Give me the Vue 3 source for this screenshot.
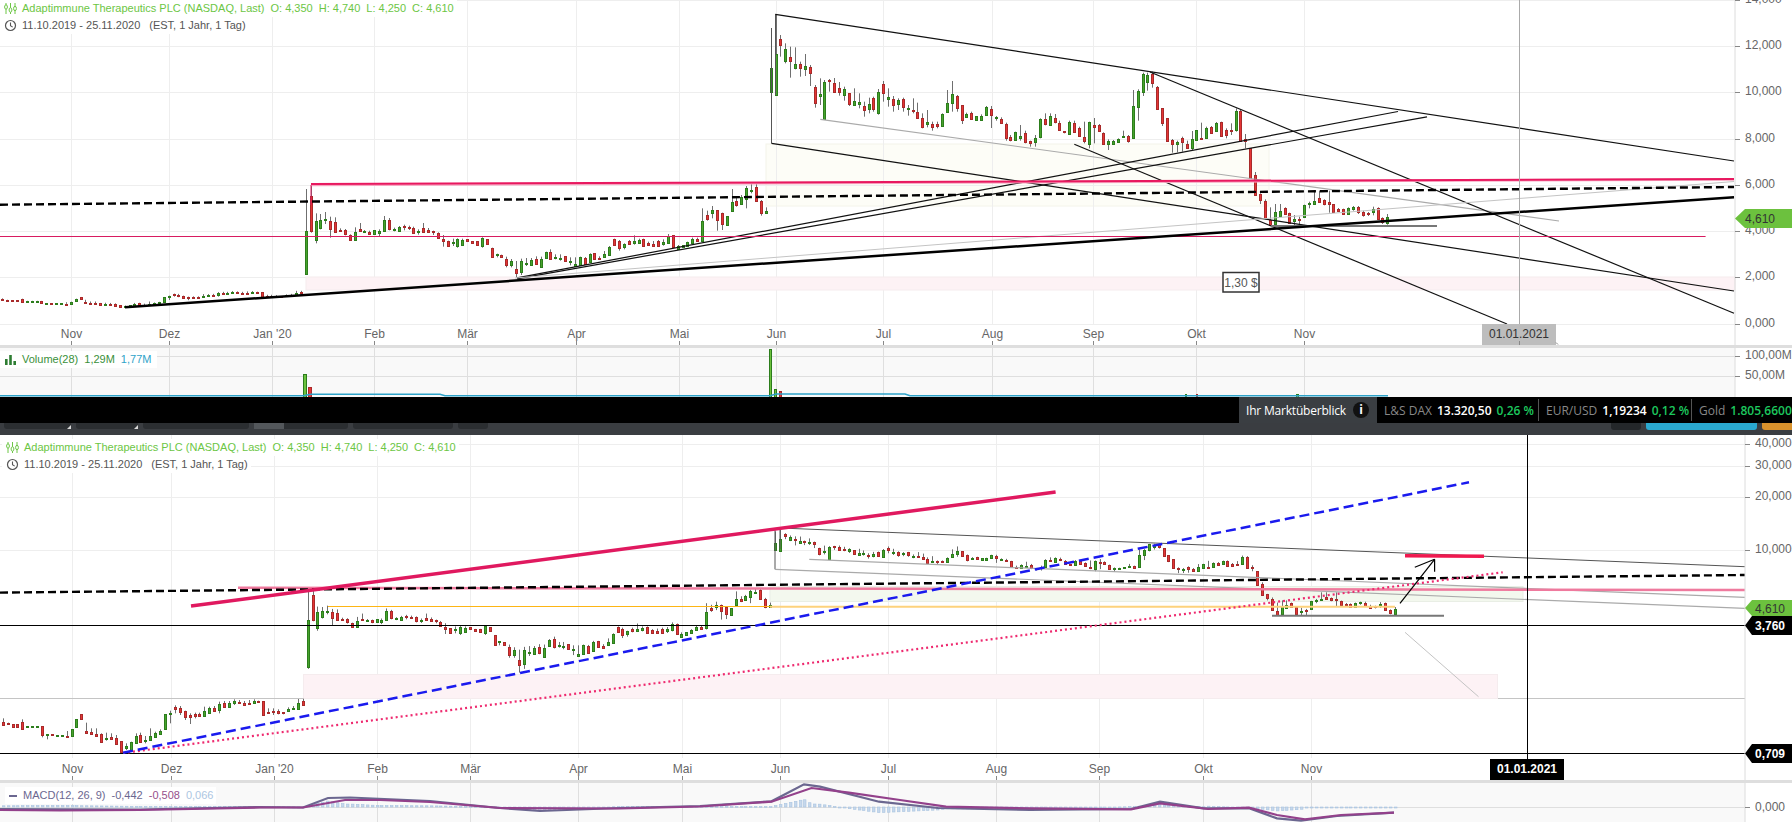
<script setup>
// Bars read off the chart: [up, bodyTop, bodyBottom, high, low]
// early = lower log chart (y = 600 + v / 3), late = upper linear chart (y = v / 3)
const early = [
  [0,365,374,355,375],[0,368,371],[0,372,380],[0,372,380],[0,365,387,358,390],[1,378,381],[1,378,380],[1,378,380],
  [0,379,405,379,412],[1,403,405,403,418],[0,403,405],[1,405,408],[1,405,408],[0,408,410,393,410],[1,387,409],[1,358,380],
  [0,343,358],[0,392,400,368,400],[0,396,403,385,403],[0,402,408,385,408],[0,403,425,400,427],[1,413,417,398,422],[0,411,416,400,416],
  [0,414,431,405,433],[0,424,455,424,458],[1,438,445,430,450],[1,427,450,425,450],[1,408,430,400,430],[0,406,425,398,425],[1,419,421,408,430],
  [1,408,420,385,420],[1,399,411,395,411],[1,393,401,388,405],[1,343,386],[1,338,342,332,370],[0,320,326,316,340],[0,325,336,318,345],
  [0,332,350,332,360],[0,344,350,340,372],[0,342,348,338,355],[0,342,347,338,347],[1,332,347,320,347],[1,325,338,320,338],[0,325,333,318,333],
  [1,312,330,305,340],[0,308,322,303,322],[1,310,322,303,322],[1,304,308,298,315],[0,305,310,300,310],[0,308,314,303,318],[0,308,311,300,315],
  [1,304,308,298,312],[0,302,305],[0,304,344],[0,335,338,325,342],[0,334,337,325,345],[0,333,338,328,343],[0,337,339,337,343],[1,327,333,322,333],
  [1,323,327,318,327],[1,309,326,296,326],[0,303,314,296,314]
]
const late = [
  [1,693,822,567,825],[0,588,693,555,698],[1,663,720,640,730],[1,660,684,642,688],[1,657,660,636,672],[0,664,687,650,713],[0,666,695,652,697],
  [0,690,694,685,696],[0,691,702,687,706],[0,705,719,703,720],[1,697,719,682,720],[0,688,693,669,696],[1,693,697,690,699],[0,695,702,692,705],
  [1,691,701],[1,692,700,688,708],[1,660,692,648,692],[0,660,687,654,691],[1,687,691,683,694],[1,681,692,678,692],[0,678,681,674,691],
  [0,681,683,677,690],[0,684,698,680,702],[1,692,694,688,704],[0,685,695,669,697],[0,690,697,684,697],[0,694,696,692,705],[0,700,713,697,716],
  [0,718,724,705,740],[0,722,737],[1,726,729,716,738],[1,717,738,715,743],[1,720,734,716,736],[0,718,724],[0,724,730],[0,724,735],
  [1,715,737,712,743],[0,718,732],[0,743,770],[1,761,764,761,772],[0,764,770],[0,777,795,770,802],[1,784,796,777,802],[0,807,818,783,832],
  [1,784,815,776,825],[1,788,790,774,798],[1,780,794,774,794],[0,777,791,769,794],[1,778,800,770,800],[1,757,773,755,773],[0,756,777,748,780],
  [1,772,775,763,778],[1,774,776,763,782],[0,769,782],[1,782,784,772,796],[1,793,797,772,800],[1,772,794,770,794],[0,774,791,771,791],
  [1,763,786,760,788],[0,760,776],[0,773,778,769,778],[1,762,771,753,773],[1,741,765,738,765],[0,718,734,716,736],[0,724,743,720,752],
  [1,732,740,730,748],[0,723,732,720,735],[1,723,730,706,734],[1,720,729,716,732],[0,718,737,716,739],[0,729,736,725,738],[0,731,737,723,740],
  [0,723,737,720,737],[1,725,731,718,737],[1,707,728,702,732],[0,706,740],[1,739,748,735,750],[1,735,742],[1,727,738,725,738],[1,717,728,713,728],
  [0,718,724,713,724],[1,663,722,625,726],[0,645,656,632,662],[1,631,640,618,655],[0,631,660,631,692],[0,640,671,638,690],[1,648,674,648,677],
  [1,607,632,567,635],[0,604,614,592,620],[1,592,611,585,615],[1,565,598,558,625],[1,570,574,552,580],[0,562,604,550,606],[0,604,640,600,647],
  [1,634,640,622,642],
  [1,205,275,85,275],[1,163,285,43,285],[0,118,134,105,170],[1,148,182,130,190],[0,172,182,140,233],[1,193,205,142,208],[0,193,203,185,230],
  [1,198,206,162,228],[0,202,218,195,258],[0,262,308,255,323],[1,283,287,235,315],[1,247,356,240,356],[0,240,244,237,275],[0,250,275,234,275],
  [0,265,277,246,287],[1,268,284,260,302],[0,280,311,280,318],[1,304,316,265,318],[1,307,311,280,325],[0,319,329,305,350],[1,313,326,293,340],
  [0,295,328,290,335],[1,277,338,267,344],[0,253,280,243,305],[1,292,298,265,320],[0,298,316,288,335],[1,301,311,295,330],[0,298,320,293,335],
  [1,325,328,315,347],[0,331,333,295,340],[0,335,353,308,354],[0,355,382,340,385],[1,367,371,330,382],[0,373,380,365,392],[0,373,377,365,385],
  [1,343,377,340,377],[1,310,336,270,338],[1,283,308,243,335],[0,289,325,285,335],[0,316,360,316,372],[1,343,350,338,352],[0,340,356,335,356],
  [1,348,359],[1,348,359,343,359],[1,322,346,318,346],[0,328,344,318,384],[1,352,355,348,362],[0,358,369,352,372],[0,372,413,368,422],
  [0,412,419,405,424],[1,397,419,395,422],[1,408,413,375,422],[0,400,425,392,430],[0,424,428,422,440],[1,415,425,405,440],[1,358,412,355,415],
  [0,358,371,340,376],[1,349,374,340,378],[0,355,365,342,370],[0,370,389,362,392],[0,393,395,393,400],[1,367,401,362,404],[0,370,395,362,398],
  [0,385,408,380,410],[0,412,423,365,430],[1,367,431,365,445],[0,376,382,354,430],[0,376,392,372,395],[0,400,431,397,433],[1,422,431,418,450],
  [1,424,431,420,432],[1,418,425,415,428],[1,408,412,392,414],[0,408,423,405,428],[1,318,413,270,415],[1,274,322,268,362],[1,223,275,218,288],
  [1,226,245,218,272],[0,222,248,215,263],[0,262,326,258,328],
  [0,324,368,324,378],[0,355,422,355,425],[0,420,431,417,458],[1,426,431,422,457],[0,413,427,410,455],[0,431,443,422,446],[1,418,443,393,450],
  [1,391,421],[0,415,417,368,420],[1,384,413,380,415],[0,382,398,378,400],[1,370,393,366,393],[0,367,407,365,408],[0,390,404,385,415],
  [0,390,392,370,405],[1,334,390,325,395],[0,334,422,330,425],[0,418,422,402,445],[0,445,534],[0,526,584,516,584],[0,582,599,580,612],
  [0,604,654,598,658],[0,660,675,622,678],[1,637,672,612,675],[1,633,647,612,650],[0,624,641,622,645],[0,640,669,638,672],[1,658,664,645,678],
  [0,656,658,650,675],[1,616,652,614,654],[1,609,611,605,625],[1,603,611,572,613],[0,594,605,572,608],[0,600,612,598,616],[0,607,611,572,638],
  [0,613,635],[0,627,634,624,636],[0,628,641,626,643],[1,625,641,622,643],[1,621,626,618,632],[0,622,636,618,642],[0,636,644,632,650],
  [0,639,643,636,648],[1,628,635,620,646],[0,624,656,622,658],[0,655,667,652,672],[1,652,669,642,674]
]

const fromLog = v => 10 ** (1 - (600 + v / 3 - 550) / 176)
const fromLinear = v => (324 - v / 3) / 23.2
const decode = (row, price) => {
  const [up, t, b, h = t, l = b] = row
  return { up, top: price(t), bottom: price(b), high: price(h), low: price(l) }
}
const bars = [...early.map(r => decode(r, fromLog)), ...late.map(r => decode(r, fromLinear))]

const linY = p => 324 - 23.2 * p
const logY = p => 550 + 176 * (1 - Math.log10(p))

function candles(first, last, toY) {
  const step = (last - first) / (bars.length - 1)
  return bars.map((c, i) => {
    const x = Math.round(first + i * step) + 0.5
    const y = Math.round(toY(c.top))
    return {
      x,
      y: y + 0.5,
      h: Math.max(1, Math.round(toY(c.bottom)) - y),
      hi: toY(c.high),
      lo: toY(c.low),
      up: c.up
    }
  })
}
const upperBars = candles(2.3, 1387.3, linY)
const lowerBars = candles(2.7, 1394.7, logY)

const upperMonths = [
  ['Nov', 71], ['Dez', 169], ["Jan '20", 272], ['Feb', 374], ['Mär', 467], ['Apr', 576], ['Mai', 679],
  ['Jun', 776], ['Jul', 883], ['Aug', 992], ['Sep', 1093], ['Okt', 1196], ['Nov', 1304]
]
const lowerMonths = [
  ['Nov', 72], ['Dez', 171], ["Jan '20", 274], ['Feb', 377], ['Mär', 470], ['Apr', 578], ['Mai', 682],
  ['Jun', 780], ['Jul', 888], ['Aug', 996], ['Sep', 1099], ['Okt', 1203], ['Nov', 1311]
]
const upperPrices = [['14,000', 0], ['12,000', 46], ['10,000', 92], ['8,000', 139], ['6,000', 185], ['4,000', 231], ['2,000', 277], ['0,000', 324]]
const lowerPrices = [['40,000', 444], ['30,000', 466], ['20,000', 497], ['10,000', 550]]

// Hand-drawn trend lines, screen coordinates: [x1, y1, x2, y2, class]
const upperLines = [
  [771.5, 28, 771.5, 143.3, 'thin-dark'], [775.5, 14.3, 775.5, 95, 'thin-dark'],
  [775.3, 14.3, 1734, 161, 'thin-black'], [771.5, 143.3, 1734, 291, 'thin-black'],
  [820.3, 119.3, 1559, 221, 'thin-grey'], [1074.3, 144.3, 1507, 324, 'thin-black'], [1150, 72, 1734, 313.3, 'thin-black'],
  [517, 277.8, 1398, 111.5, 'thin-black'], [517, 278.8, 1427, 116.8, 'thin-black'],
  [515, 278, 1734, 181.5, 'thin-pale'],
  [1271, 226, 1437, 226, 'bar-grey'],
  [0, 236.5, 1705.6, 236.5, 'pink-thin'],
  [311, 185, 1734, 179.5, 'pink-halo'], [311, 184, 1734, 179, 'pink-wide'], [311, 185, 311, 205, 'pink-thin'],
  [0, 204.7, 1734, 187, 'dash-black'],
  [125, 307.3, 1734, 197.3, 'support']
]
const lowerLines = [
  [775, 528, 775, 569.3, 'thin-dark'], [780, 528, 780, 549, 'thin-dark'],
  [780, 528, 1745, 566.7, 'thin-dark'], [775, 569.3, 1745, 608.3, 'thin-grey'],
  [809.3, 559.3, 1745, 597.3, 'thin-grey'], [1405, 632.3, 1478.5, 696.7, 'thin-pale'],
  [0, 698.5, 303, 698.5, 'thin-pale'], [1498, 698.5, 1745, 698.5, 'thin-pale'],
  [328, 606.5, 770, 606.5, 'orange'], [770, 606.8, 1395, 606.8, 'orange-pale'],
  [238, 587.8, 1745, 590, 'pink-pale'],
  [0, 592.6, 1745, 575, 'dash-black'],
  [0, 625.5, 1745, 625.5, 'axis-black'], [0, 753.5, 1745, 753.5, 'axis-black'],
  [1272, 615.7, 1444, 615.7, 'bar-grey'],
  [123, 753, 1502.7, 572.3, 'dotted'],
  [123, 752.7, 1469, 482.3, 'dash-blue'],
  [191, 606, 1055.6, 492, 'pink-fat'],
  [1405, 555.7, 1484, 556.3, 'red-fat'],
  [1400, 603.3, 1434.6, 559.3, 'arrow'], [1414.8, 567.3, 1434.6, 559.3, 'arrow'], [1434.6, 559.3, 1434.6, 571.7, 'arrow']
]

const volumeBars = [
  [303, 374, 4, 1], [308, 387, 4, 0], [769, 349, 3, 1], [774, 389, 3, 1], [779, 391, 3, 0], [1185, 394, 2, 1], [1196, 394, 2, 0],
  [1296, 394, 3, 1]
]
const volumeAverage = '0,395.8 303,395.8 311,394.3 440,394.3 445,395.8 770,395.8 776,394 905,394 910,395.8 1388,395.8'

const macdPts = [
  [0, 809], [140, 809.5], [260, 807], [303, 807.5], [328, 798], [350, 797.5], [430, 801], [500, 808], [540, 811], [620, 808], [700, 806],
  [771.5, 801.3], [804, 784.3], [820, 786.7], [879, 801.7], [938, 808], [1030, 810], [1131, 809], [1160, 801.7], [1204, 808.3], [1249, 808.3],
  [1277, 818.3], [1301, 820.7], [1337, 816], [1394, 812.7]
]
const signalPts = [
  [0, 810], [60, 810.5], [140, 810], [260, 807.5], [303, 807.5], [345, 800], [380, 800], [430, 802], [500, 808], [620, 808.5], [700, 806.5],
  [771.5, 801.7], [811.5, 788], [849, 792.7], [900, 800], [946, 806.7], [1030, 808.3], [1131, 809.3], [1160, 803.3], [1208, 809], [1249, 807.7],
  [1277, 815], [1305, 819.3], [1341, 815], [1394, 812.7]
]
const toPoints = pts => pts.map(p => p.join(',')).join(' ')

function valueAt(pts, x) {
  for (let i = 1; i < pts.length; i++) {
    if (x <= pts[i][0]) {
      const [x0, y0] = pts[i - 1]
      const [x1, y1] = pts[i]
      return y0 + ((y1 - y0) * (x - x0)) / (x1 - x0)
    }
  }
  return pts[pts.length - 1][1]
}

const histogram = lowerBars.map(c => {
  const diff = (valueAt(signalPts, c.x) - valueAt(macdPts, c.x)) * 1.2
  return { x: c.x - 1, y: diff > 0 ? 807 - diff : 807, h: Math.max(1, Math.abs(diff)) }
})

const ticker = [
  { name: 'L&S DAX', value: '13.320,50', change: '0,26 %' },
  { name: 'EUR/USD', value: '1,19234', change: '0,12 %' },
  { name: 'Gold', value: '1.805,66000', change: '' }
]
</script>

<template>
  <div class="page">
    <section class="pane upper">
      <svg class="plot" width="1792" height="345" viewBox="0 0 1792 345">
        <rect x="766" y="144" width="503" height="62" class="zone-yellow" />
        <g class="grid">
          <line v-for="m in upperMonths" :key="'uv' + m[1]" :x1="m[1] + 0.5" y1="0" :x2="m[1] + 0.5" y2="324" />
          <line v-for="p in upperPrices" :key="'uh' + p[1]" x1="0" :y1="p[1] + 0.5" x2="1735" :y2="p[1] + 0.5" />
        </g>
        <rect x="306" y="277" width="1429" height="13" class="zone-pink" />
        <g v-for="(c, i) in upperBars" :key="'ub' + i">
          <line class="wick" :x1="c.x" :y1="c.hi" :x2="c.x" :y2="c.lo" />
          <rect :class="c.up ? 'body-up' : 'body-down'" :x="c.x - 1" :y="c.y" width="2" :height="c.h" />
        </g>
        <line v-for="(l, i) in upperLines" :key="'ul' + i" :class="l[4]" :x1="l[0]" :y1="l[1]" :x2="l[2]" :y2="l[3]" />
        <line x1="1519.5" y1="0" x2="1519.5" y2="345" class="cursor-grey" />

        <g class="note">
          <rect x="1223" y="272.5" width="36" height="19.5" />
          <text x="1241" y="287" text-anchor="middle">1,30 $</text>
        </g>

        <line x1="1735" y1="0" x2="1735" y2="345" class="axis-edge" />
        <g v-for="p in upperPrices" :key="'up' + p[1]">
          <line class="tick" x1="1735" :y1="p[1] + 0.5" x2="1740" :y2="p[1] + 0.5" />
          <text class="axis-text" x="1745" :y="p[1] + 3">{{ p[0] }}</text>
        </g>
        <polygon points="1735,218.5 1745,209 1792,209 1792,228 1745,228" class="tag-green" />
        <text class="tag-text-dark" x="1745" y="223">4,610</text>

        <g v-for="m in upperMonths" :key="'um' + m[1]">
          <text class="axis-text" :x="m[1] + 0.5" y="337.5" text-anchor="middle">{{ m[0] }}</text>
          <line class="tick" :x1="m[1] + 0.5" y1="341" :x2="m[1] + 0.5" y2="345" />
        </g>
        <rect x="1482" y="324" width="74" height="21" class="date-grey" />
        <text class="tag-text-dark" x="1519" y="337.5" text-anchor="middle">01.01.2021</text>
        <line class="tick" x1="1519.5" y1="341" x2="1519.5" y2="345" />
        <line class="tick" x1="1556" y1="342.5" x2="1558" y2="344.5" />
      </svg>
      <div class="legend">
        <div class="legend-row">
          <svg class="icon" width="13" height="13" viewBox="0 0 13 13">
            <path d="M2 1v11M6.5 1v11M11 1v11" stroke="#6cc644" stroke-width="1" fill="none" />
            <ellipse cx="2" cy="5" rx="1.4" ry="2.2" fill="#fff" stroke="#6cc644" />
            <ellipse cx="6.5" cy="8" rx="1.4" ry="2.2" fill="#fff" stroke="#6cc644" />
            <ellipse cx="11" cy="6.5" rx="1.4" ry="2.2" fill="#fff" stroke="#6cc644" />
          </svg>
          <span class="title">Adaptimmune Therapeutics PLC (NASDAQ, Last)</span>
          <span class="title">O: 4,350</span>
          <span class="title">H: 4,740</span>
          <span class="title">L: 4,250</span>
          <span class="title">C: 4,610</span>
        </div>
        <div class="legend-row">
          <svg class="icon" width="13" height="13" viewBox="0 0 13 13">
            <circle cx="6.5" cy="6.5" r="5" fill="none" stroke="#555" stroke-width="1.2" />
            <path d="M6.5 3.5v3.2l2.2 1.4" fill="none" stroke="#555" stroke-width="1.1" />
          </svg>
          <span class="range">11.10.2019 - 25.11.2020</span>
          <span class="range range-gap">(EST, 1 Jahr, 1 Tag)</span>
        </div>
      </div>
    </section>

    <div class="divider"></div>

    <section class="pane volume">
      <svg class="plot" width="1792" height="49" viewBox="0 348 1792 49">
        <g class="grid-dark">
          <line v-for="m in upperMonths" :key="'vv' + m[1]" :x1="m[1] + 0.5" y1="348" :x2="m[1] + 0.5" y2="397" />
          <line x1="0" y1="356.5" x2="1735" y2="356.5" />
          <line x1="0" y1="376.5" x2="1735" y2="376.5" />
        </g>
        <rect
          v-for="b in volumeBars"
          :key="'vb' + b[0]"
          :class="b[3] ? 'vol-up' : 'vol-down'"
          :x="b[0] + 0.5"
          :y="b[1] + 0.5"
          :width="b[2] - 1"
          :height="397 - b[1]"
        />
        <polyline :points="volumeAverage" class="vol-average" />
        <rect x="1735" y="348" width="57" height="49" fill="#fff" />
        <line x1="1735" y1="348" x2="1735" y2="397" class="axis-edge" />
        <line class="tick" x1="1735" y1="356.5" x2="1740" y2="356.5" />
        <line class="tick" x1="1735" y1="376.5" x2="1740" y2="376.5" />
        <text class="axis-text" x="1745" y="359">100,00M</text>
        <text class="axis-text" x="1745" y="379">50,00M</text>
      </svg>
      <div class="legend legend-volume">
        <div class="legend-row">
          <svg class="icon" width="13" height="13" viewBox="0 0 13 13">
            <path d="M1 6h2.6v6H1zM5.2 2h2.6v10H5.2zM9.4 8H12v4H9.4z" fill="#2e7d32" />
          </svg>
          <span class="vol-name">Volume(28)</span>
          <span class="vol-name">1,29M</span>
          <span class="vol-blue">1,77M</span>
        </div>
      </div>
    </section>

    <div class="ticker">
      <div class="ticker-head">
        <span>Ihr Marktüberblick</span>
        <span class="info">i</span>
      </div>
      <div v-for="t in ticker" :key="t.name" class="ticker-item">
        <span class="ticker-name">{{ t.name }}</span>
        <span class="ticker-value" :class="{ 'ticker-gold': !t.change }">{{ t.value }}</span>
        <span v-if="t.change" class="ticker-change">{{ t.change }}</span>
      </div>
    </div>

    <div class="toolbar">
      <div class="tool tool-a"><i class="corner"></i></div>
      <div class="tool tool-b"><i class="corner"></i></div>
      <div class="tool tool-c"></div>
      <div class="tool tool-d"><i class="lit"></i></div>
      <div class="tool tool-e"></div>
      <div class="tool tool-f"></div>
      <div class="tool tool-g"></div>
      <div class="tool tool-blue"></div>
      <div class="tool tool-orange"></div>
    </div>

    <section class="pane lower">
      <svg class="plot" width="1792" height="345" viewBox="0 435 1792 345">
        <g class="grid">
          <line v-for="m in lowerMonths" :key="'lv' + m[1]" :x1="m[1] + 0.5" y1="435" :x2="m[1] + 0.5" y2="758" />
          <line v-for="p in lowerPrices" :key="'lh' + p[1]" x1="0" :y1="p[1] + 0.5" x2="1745" :y2="p[1] + 0.5" />
        </g>
        <rect x="770" y="586.5" width="753" height="15" class="zone-green" />
        <rect x="303.5" y="674.5" width="1194" height="24" class="zone-pink" />
        <g v-for="(c, i) in lowerBars" :key="'lb' + i">
          <line class="wick" :x1="c.x" :y1="c.hi" :x2="c.x" :y2="c.lo" />
          <rect :class="c.up ? 'body-up' : 'body-down'" :x="c.x - 1" :y="c.y" width="2" :height="c.h" />
        </g>
        <line v-for="(l, i) in lowerLines" :key="'ll' + i" :class="l[4]" :x1="l[0]" :y1="l[1]" :x2="l[2]" :y2="l[3]" />
        <line x1="1527.5" y1="435" x2="1527.5" y2="780" class="cursor-black" />

        <line x1="1745" y1="435" x2="1745" y2="780" class="axis-edge" />
        <g v-for="p in lowerPrices" :key="'lp' + p[1]">
          <line class="tick" x1="1745" :y1="p[1] + 0.5" x2="1750" :y2="p[1] + 0.5" />
          <text class="axis-text" x="1755" :y="p[1] + 3">{{ p[0] }}</text>
        </g>
        <polygon points="1745,608 1752,600 1792,600 1792,616 1752,616" class="tag-green" />
        <text class="tag-text-dark" x="1755" y="612.5">4,610</text>
        <polygon points="1745,625.5 1752,616 1792,616 1792,635 1752,635" class="tag-black" />
        <text class="tag-text-light" x="1755" y="629.5">3,760</text>
        <polygon points="1745,753.5 1752,744 1792,744 1792,763 1752,763" class="tag-black" />
        <text class="tag-text-light" x="1755" y="757.5">0,709</text>

        <g v-for="m in lowerMonths" :key="'lm' + m[1]">
          <text class="axis-text" :x="m[1] + 0.5" y="772.5" text-anchor="middle">{{ m[0] }}</text>
          <line class="tick" :x1="m[1] + 0.5" y1="776" :x2="m[1] + 0.5" y2="780" />
        </g>
        <rect x="1490" y="759" width="74" height="21" class="tag-black" />
        <text class="tag-text-light" x="1527" y="772.5" text-anchor="middle">01.01.2021</text>
      </svg>
      <div class="legend legend-lower">
        <div class="legend-row">
          <svg class="icon" width="13" height="13" viewBox="0 0 13 13">
            <path d="M2 1v11M6.5 1v11M11 1v11" stroke="#6cc644" stroke-width="1" fill="none" />
            <ellipse cx="2" cy="5" rx="1.4" ry="2.2" fill="#fff" stroke="#6cc644" />
            <ellipse cx="6.5" cy="8" rx="1.4" ry="2.2" fill="#fff" stroke="#6cc644" />
            <ellipse cx="11" cy="6.5" rx="1.4" ry="2.2" fill="#fff" stroke="#6cc644" />
          </svg>
          <span class="title">Adaptimmune Therapeutics PLC (NASDAQ, Last)</span>
          <span class="title">O: 4,350</span>
          <span class="title">H: 4,740</span>
          <span class="title">L: 4,250</span>
          <span class="title">C: 4,610</span>
        </div>
        <div class="legend-row">
          <svg class="icon" width="13" height="13" viewBox="0 0 13 13">
            <circle cx="6.5" cy="6.5" r="5" fill="none" stroke="#555" stroke-width="1.2" />
            <path d="M6.5 3.5v3.2l2.2 1.4" fill="none" stroke="#555" stroke-width="1.1" />
          </svg>
          <span class="range">11.10.2019 - 25.11.2020</span>
          <span class="range range-gap">(EST, 1 Jahr, 1 Tag)</span>
        </div>
      </div>
    </section>

    <div class="divider"></div>

    <section class="pane macd">
      <svg class="plot" width="1792" height="39" viewBox="0 783 1792 39">
        <g class="grid-dark">
          <line v-for="m in lowerMonths" :key="'mv' + m[1]" :x1="m[1] + 0.5" y1="783" :x2="m[1] + 0.5" y2="822" />
          <line x1="0" y1="807.5" x2="1745" y2="807.5" />
        </g>
        <rect v-for="(h, i) in histogram" :key="'mh' + i" class="hist" :x="h.x" :y="h.y" width="2.5" :height="h.h" />
        <polyline :points="toPoints(macdPts)" class="macd-line" />
        <polyline :points="toPoints(signalPts)" class="signal-line" />
        <rect x="1745" y="783" width="47" height="39" fill="#fff" />
        <line x1="1745" y1="783" x2="1745" y2="822" class="axis-edge" />
        <line class="tick" x1="1745" y1="807.5" x2="1750" y2="807.5" />
        <text class="axis-text" x="1755" y="810.5">0,000</text>
      </svg>
      <div class="legend legend-macd">
        <div class="legend-row">
          <i class="macd-key"></i>
          <span class="macd-name">MACD(12, 26, 9)</span>
          <span class="macd-name">-0,442</span>
          <span class="macd-sig">-0,508</span>
          <span class="macd-hist">0,066</span>
        </div>
      </div>
    </section>
  </div>
</template>

<style>
html,
body {
  margin: 0;
  background: #fff;
  overflow: hidden;
}
</style>

<style scoped>
.page {
  width: 1792px;
  height: 822px;
  overflow: hidden;
  display: flex;
  flex-direction: column;
  background: #fff;
  font-family: "Liberation Sans", Arial, sans-serif;
}

.pane {
  position: relative;
  flex: none;
}

.plot {
  display: block;
}

.upper,
.lower {
  height: 345px;
}

.volume {
  height: 49px;
  background: #f9f9f9;
}

.macd {
  height: 39px;
  background: #f9f9f9;
}

.divider {
  flex: none;
  height: 3px;
  background: #dedede;
}

/* legends lie over the charts */
.legend {
  position: absolute;
  left: 0;
  top: 0;
  display: flex;
  flex-direction: column;
  align-items: flex-start;
  font-size: 11px;
  line-height: 17px;
}

.legend-row {
  display: flex;
  align-items: center;
  gap: 6px;
  padding: 0 3px 0 4px;
  background: #fff;
}

.legend-lower {
  left: 2px;
  top: 4px;
}

.legend-volume {
  top: 3px;
}

.legend-macd {
  left: 5px;
  top: 4px;
}

.legend-volume .legend-row {
  padding-right: 6px;
}

.icon {
  flex: none;
  margin-right: -1px;
}

.title {
  color: #6cc644;
}

.range {
  color: #555;
}

.range-gap {
  margin-left: 3px;
}

.vol-name {
  color: #3a8f3a;
}

.vol-blue {
  color: #2fa3c9;
}

.macd-key {
  display: block;
  width: 8px;
  height: 2px;
  background: #6b6790;
}

.macd-name {
  color: #6b6790;
}

.macd-sig {
  color: #964f8b;
}

.macd-hist {
  color: #adc6e2;
}

/* chart parts */
.grid line {
  stroke: #eeeeee;
}

.grid-dark line {
  stroke: #dfdfdf;
}

.zone-yellow {
  fill: #fdfdf7;
  stroke: #f4f4ea;
}

.zone-pink {
  fill: #fdf2f5;
  stroke: #f5ecee;
}

.zone-green {
  fill: #f3f8ee;
  stroke: #e9eee5;
}

.wick {
  stroke: #6f6f6f;
}

.body-up {
  fill: #47a32c;
  stroke: #2c7d1c;
}

.body-down {
  fill: #e53535;
  stroke: #a82a2a;
}

.thin-black {
  stroke: #111;
  stroke-width: 1.2;
}

.thin-dark {
  stroke: #555;
  stroke-width: 1;
}

.thin-grey {
  stroke: #aaa;
  stroke-width: 1.2;
}

.thin-pale {
  stroke: #c4c4c4;
  stroke-width: 1;
}

.bar-grey {
  stroke: #777;
  stroke-width: 2;
}

.pink-thin {
  stroke: #d81b60;
  stroke-width: 1;
}

.pink-wide {
  stroke: #e8185f;
  stroke-width: 2;
}

.pink-halo {
  stroke: #f7a5c0;
  stroke-width: 2.5;
}

.pink-pale {
  stroke: #ef7a9e;
  stroke-width: 2.5;
}

.pink-fat {
  stroke: #e0195f;
  stroke-width: 3.5;
}

.red-fat {
  stroke: #f0194f;
  stroke-width: 3.5;
}

.dash-black {
  stroke: #000;
  stroke-width: 2.4;
  stroke-dasharray: 8 4;
}

.dash-blue {
  stroke: #1a1aee;
  stroke-width: 2.5;
  stroke-dasharray: 10 5;
}

.dotted {
  stroke: #ee2a6f;
  stroke-width: 2.2;
  stroke-dasharray: 2 3;
}

.support {
  stroke: #000;
  stroke-width: 2.5;
}

.axis-black {
  stroke: #000;
  stroke-width: 1;
}

.orange {
  stroke: #fdb515;
  stroke-width: 1;
}

.orange-pale {
  stroke: #fdd27c;
  stroke-width: 2;
}

.arrow {
  stroke: #000;
  stroke-width: 1.2;
}

.cursor-grey {
  stroke: #aaa;
}

.cursor-black {
  stroke: #000;
}

.axis-edge {
  stroke: #dcdcdc;
}

.tick {
  stroke: #888;
}

.axis-text {
  font-size: 12px;
  fill: #666;
}

.note rect {
  fill: #fff;
  stroke: #333;
  stroke-width: 1.5;
}

.note text {
  font-size: 12px;
  fill: #555;
}

.tag-green {
  fill: #6cc13e;
}

.tag-black {
  fill: #000;
}

.date-grey {
  fill: #bdbdbd;
}

.tag-text-dark {
  font-size: 12px;
  fill: #333;
}

.tag-text-light {
  font-size: 12px;
  font-weight: 700;
  fill: #fff;
}

.vol-up {
  fill: #6cc13e;
  stroke: #2c7d1c;
}

.vol-down {
  fill: #e53535;
  stroke: #a82a2a;
}

.vol-average {
  fill: none;
  stroke: #2ea3c9;
  stroke-width: 1.5;
}

.hist {
  fill: #c6d8ec;
  stroke: #a9c4e0;
  stroke-width: 0.6;
}

.macd-line {
  fill: none;
  stroke: #6b6790;
  stroke-width: 2.2;
}

.signal-line {
  fill: none;
  stroke: #93418b;
  stroke-width: 2.2;
}

/* ticker bar */
.ticker {
  flex: none;
  height: 26px;
  padding-left: 1239px;
  display: flex;
  align-items: stretch;
  background: #000;
  font-family: "Open Sans", sans-serif;
  font-size: 12px;
  white-space: nowrap;
  overflow: hidden;
}

.ticker-head {
  flex: none;
  width: 138px;
  box-sizing: border-box;
  padding-left: 7px;
  display: flex;
  align-items: center;
  gap: 7px;
  background: #3a3e42;
  color: #fff;
  letter-spacing: -0.2px;
}

.info {
  width: 16px;
  height: 16px;
  border-radius: 50%;
  background: #111;
  font-weight: 700;
  text-align: center;
  line-height: 16px;
}

.ticker-item {
  flex: none;
  box-sizing: border-box;
  width: 153px;
  padding: 0 0 0 7px;
  display: flex;
  align-items: center;
  gap: 5px;
}

.ticker-head + .ticker-item {
  width: 161px;
}

.ticker-item + .ticker-item {
  border-left: 1px solid #555;
  margin: 2px 0;
}

.ticker-name {
  color: #888;
}

.ticker-value {
  color: #fff;
  font-weight: 600;
}

.ticker-gold {
  color: #1dc85e;
}

.ticker-change {
  color: #1dc85e;
  font-weight: 600;
}

/* cut-off toolbar under the ticker */
.toolbar {
  flex: none;
  height: 12px;
  display: flex;
  align-items: flex-start;
  gap: 5px;
  padding-left: 4px;
  background: #3a3d41;
  box-sizing: border-box;
  overflow: hidden;
}

.tool {
  position: relative;
  flex: none;
  height: 6px;
  border-radius: 0 0 3px 3px;
  background: #2b2e31;
}

.tool-a {
  width: 67px;
}

.tool-b {
  width: 62px;
}

.tool-c {
  width: 106px;
}

.tool-d {
  width: 94px;
}

.tool-e {
  width: 100px;
}

.tool-f {
  width: 30px;
}

.tool-g {
  width: 30px;
  margin-left: auto;
  height: 7px;
  background: #24272a;
}

.tool-blue {
  width: 111px;
  height: 7px;
  background: #2aa8cf;
}

.tool-orange {
  width: 30px;
  height: 7px;
  background: #d8912c;
  border-radius: 0 0 0 3px;
}

.corner {
  position: absolute;
  right: 0;
  bottom: 0;
  border-left: 4px solid transparent;
  border-bottom: 4px solid #d8d8d8;
}

.lit {
  display: block;
  width: 30px;
  height: 6px;
  background: #53575b;
}
</style>
